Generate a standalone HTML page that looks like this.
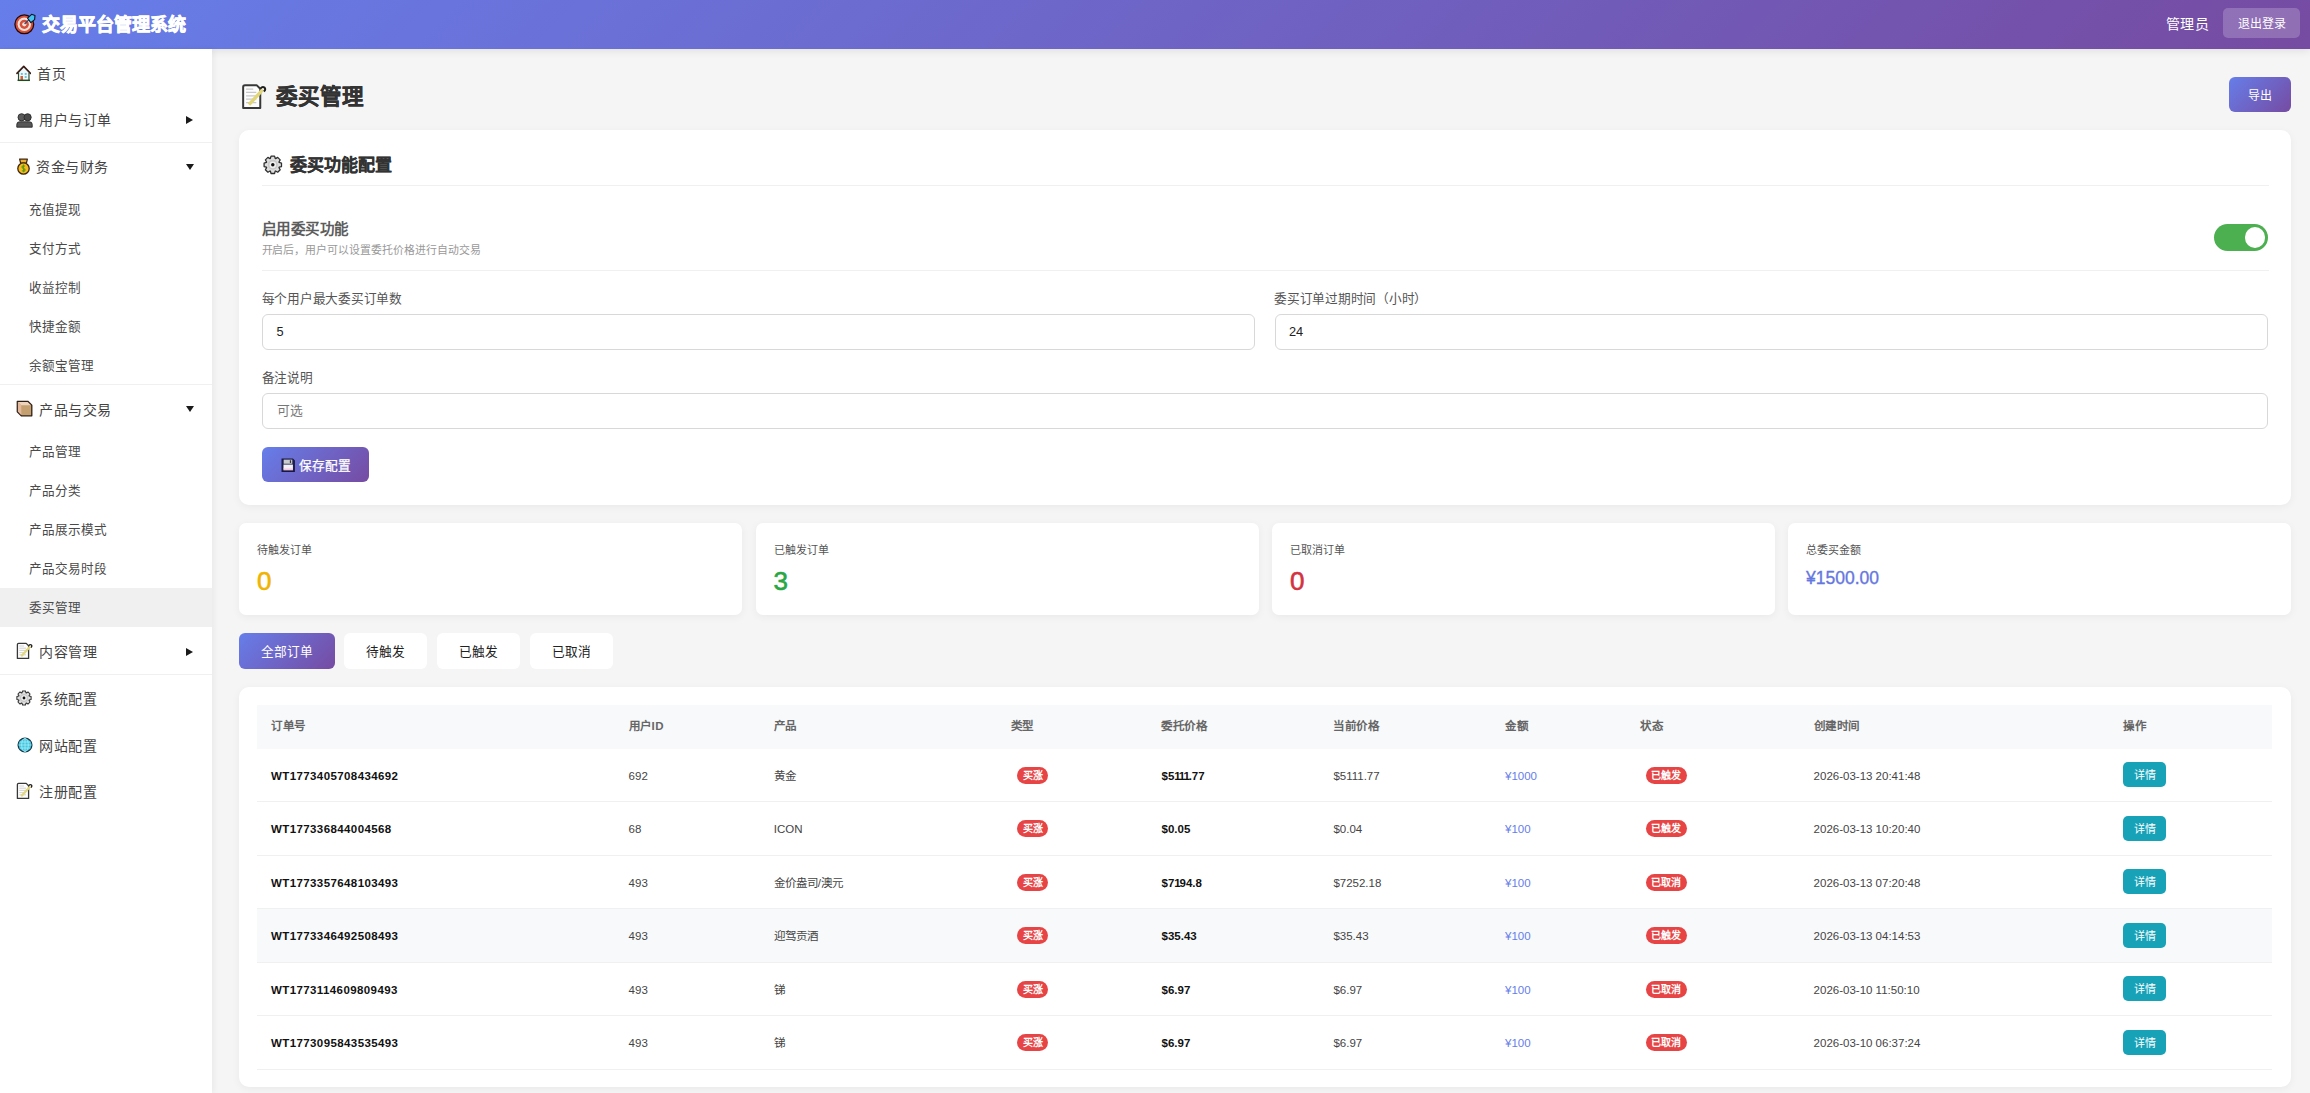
<!DOCTYPE html>
<html lang="zh-CN"><head><meta charset="utf-8">
<style>
*{box-sizing:border-box;margin:0;padding:0}
html,body{width:2310px;height:1093px;overflow:hidden}
body{font-family:"Liberation Sans",sans-serif;background:#f5f5f6;color:#333;position:relative}
.a{position:absolute;white-space:nowrap}
.hdr{left:0;top:0;width:2310px;height:49px;background:linear-gradient(135deg,#667eea 0%,#764ba2 100%);box-shadow:0 2px 8px rgba(0,0,0,.09);z-index:5}
.side{left:0;top:49px;width:212px;height:1044px;background:#fff;box-shadow:2px 0 6px rgba(0,0,0,.05);z-index:6}
.side > *{translate:0 -1px}
.sep{position:absolute;left:0;width:212px;height:1px;background:#f0f0f0}
.mi{position:absolute;left:0;font-size:14px;color:#444;line-height:20px;margin-top:1px;letter-spacing:.5px}
.si{position:absolute;left:29px;font-size:12.6px;color:#4a4a4a;line-height:18px;margin-top:1px}
.tri-r{position:absolute;left:185.8px;width:0;height:0;border-left:7.5px solid #1a1a1a;border-top:4px solid transparent;border-bottom:4px solid transparent}
.tri-d{position:absolute;left:186px;width:0;height:0;border-top:6.6px solid #1a1a1a;border-left:4.2px solid transparent;border-right:4.2px solid transparent}
.card{position:absolute;background:#fff;border-radius:10px;box-shadow:0 2px 8px rgba(0,0,0,.05)}
.inp{position:absolute;height:35.5px;border:1.5px solid #d8d8d8;border-radius:6px;background:#fff;font-size:12.8px;color:#222;padding-left:13.5px;line-height:34.5px}
.lbl{position:absolute;font-size:12.7px;letter-spacing:-.25px;color:#555;line-height:16px}
.btn{position:absolute;background:linear-gradient(135deg,#667eea 0%,#764ba2 100%);color:#fff;border-radius:6px;text-align:center}
.stat{position:absolute;top:523px;height:92px;width:503px;background:#fff;border-radius:7px;box-shadow:0 2px 8px rgba(0,0,0,.05)}
.stat .l{position:absolute;left:18px;top:18.5px;font-size:11px;color:#555;line-height:16px}
.stat .v{position:absolute;left:18px;top:43px;font-size:26px;line-height:30px;font-weight:normal;-webkit-text-stroke:.6px currentColor}
.tab{position:absolute;top:633px;height:35.5px;background:#fff;border-radius:6px;font-size:12.7px;color:#222;text-align:center;line-height:39px}
.th{position:absolute;top:718px;font-size:11.5px;letter-spacing:.5px;font-weight:bold;color:#666;line-height:16px}
.row{position:absolute;left:257px;width:2014.5px;height:53.5px;border-bottom:1px solid #f0f0f0}
.c{position:absolute;font-size:11.5px;color:#444;line-height:16px;top:19px}
.b{font-weight:bold;color:#111;letter-spacing:.4px}
.bp{font-weight:bold;color:#111}
.bdg{position:absolute;top:18px;height:17.2px;border-radius:9px;background:#e74545;color:#fff;font-size:10px;line-height:17px;text-align:center;font-weight:bold}
.det{position:absolute;top:13.5px;left:1866px;width:43px;height:25px;border-radius:5px;background:#17a2b8;color:#fff;font-size:11px;line-height:27px;text-align:center}
</style></head><body>

<div class="a hdr">
  <svg class="a" style="left:14px;top:12.5px;width:22px;height:22px" viewBox="0 0 22 22">
 <circle cx="10.3" cy="11.3" r="9.4" fill="#d4513b" stroke="#240808" stroke-width="1.3"/>
 <circle cx="10.3" cy="11.3" r="6.7" fill="#fbe2da"/>
 <circle cx="10.3" cy="11.3" r="4.6" fill="#d4513b"/>
 <circle cx="10.3" cy="11.3" r="2.1" fill="#fbe2da"/>
 <line x1="10.6" y1="11" x2="16" y2="5.6" stroke="#3a4a70" stroke-width="1.3"/>
 <path d="M13.6 5.2 L17.6 1.3 L21 2.4 L20.6 6.6 L16.8 9.6 Z" fill="#43c3ef" stroke="#0a1428" stroke-width="1.1" stroke-linejoin="round"/>
</svg>
  <div class="a" style="left:42px;top:14px;font-size:18px;font-weight:bold;color:#fff;line-height:22px;-webkit-text-stroke:.7px #fff">交易平台管理系统</div>
  <div class="a" style="left:2165.5px;top:15px;font-size:14px;letter-spacing:.8px;color:#fff;line-height:18px">管理员</div>
  <div class="a" style="left:2223px;top:8px;width:77px;height:30px;border-radius:5px;background:rgba(255,255,255,.2);color:#fff;font-size:12px;line-height:32px;text-align:center">退出登录</div>
</div>

<div class="a side">
  <svg class="a" style="left:15.8px;top:17px;width:15.5px;height:16.5px" viewBox="0 0 16 17">
 <path d="M2.6 8 L8 2.6 L13.4 8 L13.4 15.6 L2.6 15.6 Z" fill="#eef8fb"/>
 <path d="M1 8.6 L8 1.4 L15 8.6" fill="none" stroke="#3a1a14" stroke-width="1.7" stroke-linejoin="round" stroke-linecap="round"/>
 <path d="M2.6 8 L2.6 15.6 M13.4 8 L13.4 15.6" stroke="#2a4a30" stroke-width="1.2"/>
 <rect x="5" y="8.2" width="2" height="2" fill="#6cc0d8"/>
 <rect x="9" y="8.2" width="2" height="2" fill="#6cc0d8"/>
 <rect x="9" y="11.4" width="2" height="2" fill="#6cc0d8"/>
 <rect x="4.6" y="11.3" width="2.6" height="4.3" fill="#d2603e"/>
 <line x1="1.6" y1="15.8" x2="14.4" y2="15.8" stroke="#1e4a1e" stroke-width="1.5"/>
</svg>
  <div class="mi" style="top:15px;left:37px">首页</div>
  <svg class="a" style="left:16.2px;top:65.2px;width:17px;height:15px" viewBox="0 0 17 15">
 <circle cx="5.6" cy="4.3" r="3.6" fill="#5a5a5a" stroke="#2a2a2a" stroke-width=".9"/>
 <circle cx="11.6" cy="4.3" r="3.6" fill="#4a4a4a" stroke="#2a2a2a" stroke-width=".9"/>
 <path d="M0.8 14.2 L0.8 11.4 Q0.8 8.8 3.6 8.8 L13.4 8.8 Q16.2 8.8 16.2 11.4 L16.2 14.2 Z" fill="#575757" stroke="#2a2a2a" stroke-width=".9"/>
</svg>
  <div class="mi" style="top:61px;left:39px">用户与订单</div>
  <div class="tri-r" style="top:68px"></div>
  <div class="sep" style="top:94px"></div>
  <svg class="a" style="left:15.6px;top:109.8px;width:15px;height:17px" viewBox="0 0 15 17">
 <path d="M3.6 1.2 L11.4 1.2 L10.4 5 L4.6 5 Z" fill="#eeb030" stroke="#3e2410" stroke-width="1.2" stroke-linejoin="round"/>
 <circle cx="7.5" cy="10.5" r="5.7" fill="#f6bb1e" stroke="#3e2410" stroke-width="1.3"/>
 <path d="M9 8.3 Q7.5 7.2 6.2 8.2 Q5.4 9.6 7.5 10.4 Q9.6 11.2 8.8 12.7 Q7.5 13.6 5.9 12.6 M7.5 6.6 L7.5 14.3" fill="none" stroke="#5e9a10" stroke-width="1.1"/>
</svg>
  <div class="mi" style="top:108px;left:36px">资金与财务</div>
  <div class="tri-d" style="top:115.7px"></div>
  <div class="si" style="top:152px">充值提现</div>
  <div class="si" style="top:191px">支付方式</div>
  <div class="si" style="top:230px">收益控制</div>
  <div class="si" style="top:269px">快捷金额</div>
  <div class="si" style="top:308px">余额宝管理</div>
  <div class="sep" style="top:336px"></div>
  <svg class="a" style="left:16px;top:352.3px;width:17px;height:17px" viewBox="0 0 17 17">
 <path d="M1.3 1.3 L11.8 1.3 L15.8 5.3 L15.8 15.8 L5.3 15.8 L1.3 11.8 Z" fill="#c4a070" stroke="#2e1e14" stroke-width="1.3" stroke-linejoin="round"/>
 <path d="M1.9 1.9 L11.5 1.9 L15 5.3 L5.3 5.3 Z" fill="#ecd4bc"/>
 <path d="M1.9 1.9 L5.3 5.3 L5.3 15.2 L1.9 11.6 Z" fill="#e4b89c"/>
</svg>
  <div class="mi" style="top:351px;left:39px">产品与交易</div>
  <div class="tri-d" style="top:358px"></div>
  <div class="si" style="top:394px">产品管理</div>
  <div class="si" style="top:433px">产品分类</div>
  <div class="si" style="top:472px">产品展示模式</div>
  <div class="si" style="top:511px">产品交易时段</div>
  <div style="position:absolute;left:0;top:540px;width:212px;height:39px;background:#f0f0f1"></div>
  <div class="si" style="top:550px">委买管理</div>
  <svg class="a" style="left:15.9px;top:594.2px;width:17px;height:18px" viewBox="0 0 17 18">
 <path d="M1.4 2.6 Q1.4 1.4 2.6 1.4 L10.2 1.4 L12.6 3.8 L12.6 16.4 L1.4 16.4 Z" fill="#fdfdfd" stroke="#383838" stroke-width="1.3" stroke-linejoin="round"/>
 <path d="M3.3 4 H8 M3.3 6.2 H10 M3.3 8.4 H10 M3.3 10.6 H10 M3.3 12.8 H10" stroke="#c8c8c8" stroke-width=".8"/>
 <line x1="5.2" y1="14.2" x2="14.2" y2="4.4" stroke="#e2d67a" stroke-width="2.2"/>
 <path d="M12.8 3.6 Q14 2 15.4 3 Q16.4 4.2 15 5.6" fill="none" stroke="#1e1e1e" stroke-width="1.3"/>
</svg>
  <div class="mi" style="top:593px;left:39px">内容管理</div>
  <div class="tri-r" style="top:600px"></div>
  <div class="sep" style="top:626px"></div>
  <svg class="a" style="left:16.4px;top:642.4px;width:16px;height:16px" viewBox="0 0 17 17">
 <path d="M6.42 2.98 L6.97 0.95 L10.03 0.95 L10.58 2.98 L10.93 3.13 L12.75 2.08 L14.92 4.25 L13.87 6.07 L14.02 6.42 L16.05 6.97 L16.05 10.03 L14.02 10.58 L13.87 10.93 L14.92 12.75 L12.75 14.92 L10.93 13.87 L10.58 14.02 L10.03 16.05 L6.97 16.05 L6.42 14.02 L6.07 13.87 L4.25 14.92 L2.08 12.75 L3.13 10.93 L2.98 10.58 L0.95 10.03 L0.95 6.97 L2.98 6.42 L3.13 6.07 L2.08 4.25 L4.25 2.08 L6.07 3.13 Z" fill="#dedede" stroke="#2e2e2e" stroke-width="1.1" stroke-linejoin="round"/>
 <circle cx="8.5" cy="8.5" r="4.3" fill="#c8c8c8"/>
 <circle cx="8.5" cy="8.5" r="2.9" fill="#f0f0f0"/>
 <circle cx="8.5" cy="8.5" r="1.5" fill="#111"/>
</svg>
  <div class="mi" style="top:640px;left:39px">系统配置</div>
  <svg class="a" style="left:16.6px;top:689px;width:16px;height:16px" viewBox="0 0 16 16">
 <circle cx="8" cy="8" r="6.9" fill="#40c6de" stroke="#173848" stroke-width="1.3"/>
 <path d="M8 1.3 V14.7 M1.3 8 H14.7 M2.3 5 H13.7 M2.3 11 H13.7" stroke="#b4f0fa" stroke-width=".7"/>
 <ellipse cx="8" cy="8" rx="3.3" ry="6.7" fill="none" stroke="#b4f0fa" stroke-width=".7"/>
</svg>
  <div class="mi" style="top:687px;left:39px">网站配置</div>
  <svg class="a" style="left:15.9px;top:734.2px;width:17px;height:18px" viewBox="0 0 17 18">
 <path d="M1.4 2.6 Q1.4 1.4 2.6 1.4 L10.2 1.4 L12.6 3.8 L12.6 16.4 L1.4 16.4 Z" fill="#fdfdfd" stroke="#383838" stroke-width="1.3" stroke-linejoin="round"/>
 <path d="M3.3 4 H8 M3.3 6.2 H10 M3.3 8.4 H10 M3.3 10.6 H10 M3.3 12.8 H10" stroke="#c8c8c8" stroke-width=".8"/>
 <line x1="5.2" y1="14.2" x2="14.2" y2="4.4" stroke="#e2d67a" stroke-width="2.2"/>
 <path d="M12.8 3.6 Q14 2 15.4 3 Q16.4 4.2 15 5.6" fill="none" stroke="#1e1e1e" stroke-width="1.3"/>
</svg>
  <div class="mi" style="top:733px;left:39px">注册配置</div>
</div>

<!-- page title -->
<svg class="a" style="left:240.5px;top:82.5px;width:26px;height:27.5px" viewBox="0 0 17 18">
 <path d="M1.4 2.6 Q1.4 1.4 2.6 1.4 L10.2 1.4 L12.6 3.8 L12.6 16.4 L1.4 16.4 Z" fill="#fdfdfd" stroke="#383838" stroke-width="1.3" stroke-linejoin="round"/>
 <path d="M3.3 4 H8 M3.3 6.2 H10 M3.3 8.4 H10 M3.3 10.6 H10 M3.3 12.8 H10" stroke="#c8c8c8" stroke-width=".8"/>
 <line x1="5.2" y1="14.2" x2="14.2" y2="4.4" stroke="#e2d67a" stroke-width="2.2"/>
 <path d="M12.8 3.6 Q14 2 15.4 3 Q16.4 4.2 15 5.6" fill="none" stroke="#1e1e1e" stroke-width="1.3"/>
</svg>
<div class="a" style="left:275.5px;top:84px;font-size:21.5px;font-weight:bold;color:#333;line-height:26px;-webkit-text-stroke:.35px #333">委买管理</div>
<div class="btn" style="left:2229px;top:77px;width:62px;height:35px;font-size:12px;line-height:38px">导出</div>

<!-- config card -->
<div class="card" style="left:239px;top:130px;width:2052px;height:375px">
  <svg class="a" style="left:24px;top:25.2px;width:19.6px;height:19.6px" viewBox="0 0 17 17">
 <path d="M6.42 2.98 L6.97 0.95 L10.03 0.95 L10.58 2.98 L10.93 3.13 L12.75 2.08 L14.92 4.25 L13.87 6.07 L14.02 6.42 L16.05 6.97 L16.05 10.03 L14.02 10.58 L13.87 10.93 L14.92 12.75 L12.75 14.92 L10.93 13.87 L10.58 14.02 L10.03 16.05 L6.97 16.05 L6.42 14.02 L6.07 13.87 L4.25 14.92 L2.08 12.75 L3.13 10.93 L2.98 10.58 L0.95 10.03 L0.95 6.97 L2.98 6.42 L3.13 6.07 L2.08 4.25 L4.25 2.08 L6.07 3.13 Z" fill="#dedede" stroke="#2e2e2e" stroke-width="1.1" stroke-linejoin="round"/>
 <circle cx="8.5" cy="8.5" r="4.3" fill="#c8c8c8"/>
 <circle cx="8.5" cy="8.5" r="2.9" fill="#f0f0f0"/>
 <circle cx="8.5" cy="8.5" r="1.5" fill="#111"/>
</svg>
  <div class="a" style="left:51px;top:25px;font-size:17px;font-weight:bold;color:#333;line-height:22px;-webkit-text-stroke:.2px #333">委买功能配置</div>
  <div style="position:absolute;left:22.5px;top:55px;width:2007px;height:1px;background:#f0f0f0"></div>
  <div class="a" style="left:22.5px;top:90px;font-size:14.5px;letter-spacing:.5px;font-weight:bold;color:#5c5c5c;line-height:18px">启用委买功能</div>
  <div class="a" style="left:22.5px;top:113px;font-size:10.9px;letter-spacing:-.05px;color:#999;line-height:14px">开启后，用户可以设置委托价格进行自动交易</div>
  <div style="position:absolute;left:1975px;top:94px;width:54px;height:27px;border-radius:14px;background:#4caf50"></div>
  <div style="position:absolute;left:2005.5px;top:97px;width:20.5px;height:20.5px;border-radius:50%;background:#fff"></div>
  <div style="position:absolute;left:22.5px;top:140px;width:2007px;height:1px;background:#f0f0f0"></div>
  <div class="lbl" style="left:22.5px;top:161px">每个用户最大委买订单数</div>
  <div class="lbl" style="left:1035px;top:161px">委买订单过期时间（小时）</div>
  <div class="inp" style="left:23px;top:184px;width:993px">5</div>
  <div class="inp" style="left:1035.5px;top:184px;width:993px">24</div>
  <div class="lbl" style="left:22.5px;top:240px">备注说明</div>
  <div class="inp" style="left:23px;top:263px;width:2006px;color:#777">可选</div>
  <div class="btn" style="left:23px;top:317px;width:107px;height:35px;font-size:12.7px;line-height:38px;padding-left:18px;-webkit-text-stroke:.25px #fff"><svg class="a" style="left:19px;top:11px;width:14.4px;height:14.4px" viewBox="0 0 14 14">
 <path d="M1 1 L11.4 1 L13 2.6 L13 13 L1 13 Z" fill="#202050" stroke="#181840" stroke-width="1"/>
 <rect x="2.6" y="1.6" width="8.4" height="4" fill="#c8cacc"/>
 <rect x="8.6" y="2.2" width="1.2" height="2.6" fill="#333"/>
 <rect x="2.4" y="6.4" width="9.2" height="4.6" fill="#f2f0f6"/>
 <rect x="2.4" y="10.2" width="9.2" height="1.8" fill="#f4c8e0"/>
</svg>保存配置</div>
</div>

<!-- stats -->
<div class="stat" style="left:239px"><div class="l">待触发订单</div><div class="v" style="color:#f0b400">0</div></div>
<div class="stat" style="left:755.5px"><div class="l">已触发订单</div><div class="v" style="color:#28a745">3</div></div>
<div class="stat" style="left:1272px"><div class="l">已取消订单</div><div class="v" style="color:#d23340">0</div></div>
<div class="stat" style="left:1788px"><div class="l">总委买金额</div><div class="v" style="color:#6577e0;font-size:17.5px;top:44px;line-height:22px;-webkit-text-stroke:.35px currentColor">¥1500.00</div></div>

<!-- tabs -->
<div class="tab" style="left:239px;width:96px;background:linear-gradient(135deg,#667eea 0%,#764ba2 100%);color:#fff">全部订单</div>
<div class="tab" style="left:344.3px;width:83px">待触发</div>
<div class="tab" style="left:437px;width:83px">已触发</div>
<div class="tab" style="left:529.6px;width:83px">已取消</div>

<!-- table -->
<div class="card" style="left:239px;top:687px;width:2051.5px;height:400px"></div>
<div class="a" style="left:257px;top:705px;width:2014.5px;height:43.5px;background:#f8f9fa"></div>
<div class="th" style="left:271px">订单号</div>
<div class="th" style="left:628.6px">用户ID</div>
<div class="th" style="left:773.8px">产品</div>
<div class="th" style="left:1010.6px">类型</div>
<div class="th" style="left:1161px">委托价格</div>
<div class="th" style="left:1333.4px">当前价格</div>
<div class="th" style="left:1505px">金额</div>
<div class="th" style="left:1640px">状态</div>
<div class="th" style="left:1813.6px">创建时间</div>
<div class="th" style="left:2123px">操作</div>

<!--ROWS-->
<div class="row" style="top:748.5px;">
<div class="c b" style="left:14px">WT1773405708434692</div>
<div class="c" style="left:371.6px">692</div>
<div class="c" style="left:516.8px">黄金</div>
<div class="bdg" style="left:760.2px;width:30.7px">买涨</div>
<div class="c bp" style="left:904.5px">$5<span style="letter-spacing:-1.2px">1</span><span style="letter-spacing:-1.2px">1</span><span style="letter-spacing:-1.2px">1</span>.77</div>
<div class="c" style="left:1076.4px">$5111.77</div>
<div class="c" style="left:1248px;color:#667eea">¥1000</div>
<div class="bdg" style="left:1389.2px;width:40.5px">已触发</div>
<div class="c" style="left:1556.6px">2026-03-13 20:41:48</div>
<div class="det">详情</div>
</div>
<div class="row" style="top:802.0px;">
<div class="c b" style="left:14px">WT177336844004568</div>
<div class="c" style="left:371.6px">68</div>
<div class="c" style="left:516.8px">ICON</div>
<div class="bdg" style="left:760.2px;width:30.7px">买涨</div>
<div class="c bp" style="left:904.5px">$0.05</div>
<div class="c" style="left:1076.4px">$0.04</div>
<div class="c" style="left:1248px;color:#667eea">¥100</div>
<div class="bdg" style="left:1389.2px;width:40.5px">已触发</div>
<div class="c" style="left:1556.6px">2026-03-13 10:20:40</div>
<div class="det">详情</div>
</div>
<div class="row" style="top:855.5px;">
<div class="c b" style="left:14px">WT1773357648103493</div>
<div class="c" style="left:371.6px">493</div>
<div class="c" style="left:516.8px">金价盎司/澳元</div>
<div class="bdg" style="left:760.2px;width:30.7px">买涨</div>
<div class="c bp" style="left:904.5px">$7<span style="letter-spacing:-1.2px">1</span>94.8</div>
<div class="c" style="left:1076.4px">$7252.18</div>
<div class="c" style="left:1248px;color:#667eea">¥100</div>
<div class="bdg" style="left:1389.2px;width:40.5px">已取消</div>
<div class="c" style="left:1556.6px">2026-03-13 07:20:48</div>
<div class="det">详情</div>
</div>
<div class="row" style="top:909.0px;background:#f8f9fa;">
<div class="c b" style="left:14px">WT1773346492508493</div>
<div class="c" style="left:371.6px">493</div>
<div class="c" style="left:516.8px">迎驾贡酒</div>
<div class="bdg" style="left:760.2px;width:30.7px">买涨</div>
<div class="c bp" style="left:904.5px">$35.43</div>
<div class="c" style="left:1076.4px">$35.43</div>
<div class="c" style="left:1248px;color:#667eea">¥100</div>
<div class="bdg" style="left:1389.2px;width:40.5px">已触发</div>
<div class="c" style="left:1556.6px">2026-03-13 04:14:53</div>
<div class="det">详情</div>
</div>
<div class="row" style="top:962.5px;">
<div class="c b" style="left:14px">WT1773114609809493</div>
<div class="c" style="left:371.6px">493</div>
<div class="c" style="left:516.8px">锑</div>
<div class="bdg" style="left:760.2px;width:30.7px">买涨</div>
<div class="c bp" style="left:904.5px">$6.97</div>
<div class="c" style="left:1076.4px">$6.97</div>
<div class="c" style="left:1248px;color:#667eea">¥100</div>
<div class="bdg" style="left:1389.2px;width:40.5px">已取消</div>
<div class="c" style="left:1556.6px">2026-03-10 11:50:10</div>
<div class="det">详情</div>
</div>
<div class="row" style="top:1016.0px;">
<div class="c b" style="left:14px">WT1773095843535493</div>
<div class="c" style="left:371.6px">493</div>
<div class="c" style="left:516.8px">锑</div>
<div class="bdg" style="left:760.2px;width:30.7px">买涨</div>
<div class="c bp" style="left:904.5px">$6.97</div>
<div class="c" style="left:1076.4px">$6.97</div>
<div class="c" style="left:1248px;color:#667eea">¥100</div>
<div class="bdg" style="left:1389.2px;width:40.5px">已取消</div>
<div class="c" style="left:1556.6px">2026-03-10 06:37:24</div>
<div class="det">详情</div>
</div>
<!--/ROWS-->

</body></html>
